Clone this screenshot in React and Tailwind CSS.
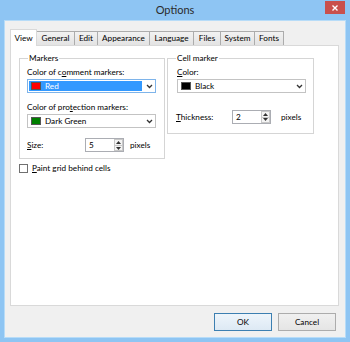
import React from 'react'

const FONT = { fontFamily: 'Lato, "Noto Sans", sans-serif' }

const TABS = [
  { label: 'View', w: 'w-[27px]', active: true },
  { label: 'General', w: 'w-[39px]' },
  { label: 'Edit', w: 'w-[24px]' },
  { label: 'Appearance', w: 'w-[53px]' },
  { label: 'Language', w: 'w-[45px]' },
  { label: 'Files', w: 'w-[28px]' },
  { label: 'System', w: 'w-[35px]' },
  { label: 'Fonts', w: 'w-[30px]' },
]

function Chevron() {
  return (
    <svg width="7" height="5" viewBox="0 0 7 5" className="block">
      <polyline points="1,1 3.5,3.5 6,1" fill="none" stroke="#333" strokeWidth="1.3" />
    </svg>
  )
}

function ColorCombo({ swatch, label, focused }) {
  return (
    <div
      className={`flex h-[14px] w-[129px] items-stretch border bg-white ${
        focused ? 'border-[#7eb4ea]' : 'border-[#c3c3c3]'
      }`}
    >
      <div
        className={`m-[1px] flex flex-1 items-center gap-[4px] pl-[2px] ${
          focused ? 'bg-[#3399ff] text-white' : 'text-black'
        }`}
      >
        <span
          className="h-[8px] w-[10px] border border-[#555]"
          style={{ backgroundColor: swatch }}
        />
        <span className="leading-none">{label}</span>
      </div>
      <div className="flex w-[12px] items-center justify-center">
        <Chevron />
      </div>
    </div>
  )
}

function SpinBox({ value }) {
  return (
    <div className="flex h-[14px] w-[39px] border border-[#abadb3] bg-white">
      <div className="flex flex-1 items-center pl-[3px] leading-none">{value}</div>
      <div className="flex w-[9px] flex-col">
        <div className="flex flex-1 items-center justify-center border border-[#c8c8c8] bg-[#f4f4f4]">
          <svg width="5" height="3" viewBox="0 0 5 3">
            <polygon points="0,3 2.5,0 5,3" fill="#333" />
          </svg>
        </div>
        <div className="flex flex-1 items-center justify-center border border-t-0 border-[#c8c8c8] bg-[#f4f4f4]">
          <svg width="5" height="3" viewBox="0 0 5 3">
            <polygon points="0,0 2.5,3 5,0" fill="#333" />
          </svg>
        </div>
      </div>
    </div>
  )
}

function GroupBox({ title, className, children }) {
  return (
    <fieldset className={`border border-[#d5d5d5] px-[7px] ${className}`}>
      <legend className="ml-[1px] px-[1px] leading-[10px]">{title}</legend>
      {children}
    </fieldset>
  )
}

export default function App() {
  return (
    <div
      className="flex h-[342px] w-[350px] flex-col bg-[#8ec5f3] text-[8.2px] text-black"
      style={FONT}
    >
      <div className="flex h-[20px] items-start">
        <div className="w-[25px]" />
        <div className="flex h-[20px] flex-1 items-center justify-center text-[11px] text-[#2b2b2b]">
          Options
        </div>
        <div className="mr-[5px] mt-[1px] flex h-[13px] w-[20px] items-center justify-center bg-[#c9504c]">
          <svg width="6" height="6" viewBox="0 0 6 6">
            <path d="M0.5 0.5 L5.5 5.5 M5.5 0.5 L0.5 5.5" stroke="#fff" strokeWidth="1.4" />
          </svg>
        </div>
      </div>

      <div className="mx-[4px] mb-[4px] flex flex-1 flex-col border border-[#b7dcf8] bg-[#f0f0f0] pb-[5px] pl-[5px] pr-[6px] pt-[8px]">
        <div className="flex h-[16px] items-end">
          {TABS.map((tab) => (
            <div
              key={tab.label}
              className={`flex ${tab.w} items-center justify-center border border-b-0 leading-none ${
                tab.active
                  ? 'relative z-10 -mb-px h-[17px] border-[#d9d9d9] bg-white pt-[1px]'
                  : '-ml-px h-[14px] border-[#acacac] bg-gradient-to-b from-[#f2f2f2] to-[#e3e3e3] first:ml-0'
              }`}
            >
              {tab.label}
            </div>
          ))}
        </div>

        <div className="flex h-[261px] flex-col border border-[#d9d9d9] bg-white pl-[8px] pt-[7px]">
          <div className="flex items-start gap-[2px]">
            <GroupBox title="Markers" className="h-[106px] w-[146px]">
              <div className="mt-[5px] leading-none">
                Color of c<span className="underline">o</span>mment markers:
              </div>
              <div className="mt-[3px]">
                <ColorCombo swatch="#ff0000" label="Red" focused />
              </div>
              <div className="mt-[10px] leading-none">
                Color of pro<span className="underline">t</span>ection markers:
              </div>
              <div className="mt-[3px]">
                <ColorCombo swatch="#008000" label="Dark Green" />
              </div>
              <div className="mt-[10px] flex items-center">
                <span className="w-[58px] leading-none">
                  <span className="underline">S</span>ize:
                </span>
                <SpinBox value="5" />
                <span className="ml-[6px] leading-none">pixels</span>
              </div>
            </GroupBox>

            <GroupBox title="Cell marker" className="h-[81px] w-[146px]">
              <div className="mt-[5px] pl-[2px] leading-none">
                <span className="underline">C</span>olor:
              </div>
              <div className="mt-[3px] pl-[2px]">
                <ColorCombo swatch="#000000" label="Black" />
              </div>
              <div className="mt-[17px] flex items-center pl-[1px]">
                <span className="w-[56px] leading-none">
                  <span className="underline">T</span>hickness:
                </span>
                <SpinBox value="2" />
                <span className="ml-[10px] leading-none">pixels</span>
              </div>
            </GroupBox>
          </div>

          <label className="mt-[5px] flex items-center gap-[4px]">
            <span className="h-[9px] w-[9px] border border-[#707070] bg-white" />
            <span className="leading-none">
              <span className="underline">P</span>aint grid behind cells
            </span>
          </label>
        </div>

        <div className="mt-[7px] flex justify-end gap-[6px] pr-[3px]">
          <button className="h-[18px] w-[58px] border border-[#3c7fb1] bg-gradient-to-b from-[#eef5fb] to-[#dde9f4] leading-none">
            OK
          </button>
          <button className="h-[18px] w-[58px] border border-[#acacac] bg-gradient-to-b from-[#f0f0f0] to-[#e5e5e5] leading-none">
            Cancel
          </button>
        </div>
      </div>
    </div>
  )
}
